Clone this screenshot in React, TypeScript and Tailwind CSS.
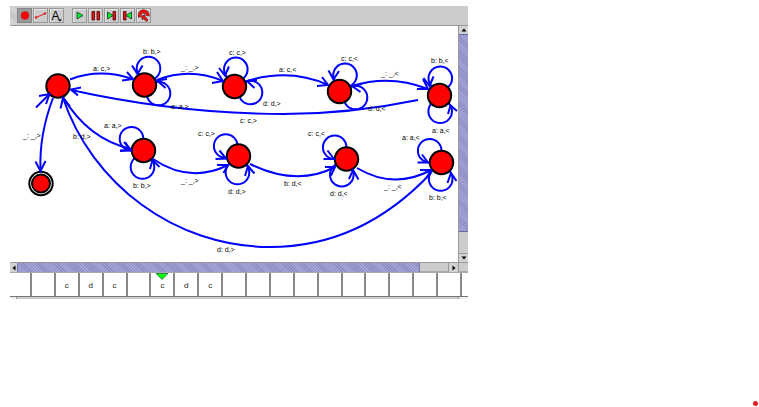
import type { ReactNode } from "react";

type Point = [number, number];

const states: Point[] = [
  [58, 86], [144.5, 85], [234.5, 86.5], [339.5, 91.5], [439.5, 95.5],
  [143.5, 150.5], [238.5, 156], [346.5, 159], [441.5, 162.5],
];

// Centres of the self-transitions; the states cover the part that overlaps them.
const loops: Point[] = [
  [148.5, 68.5], [235.8, 69.3], [345, 75.3], [440.3, 78.3],
  [158.5, 93.5], [250.5, 92.5], [355.5, 97.5], [440.2, 111.3],
  [131.5, 138.7], [142.5, 167], [225.7, 146], [237.5, 172.5],
  [334.7, 147.3], [341.8, 174.7], [429.7, 150.7], [440.7, 179],
];

const edges: string[] = [
  "M70 79.5Q100 68 132 79",
  "M157 80Q190 67 223 81",
  "M247 81Q290 68 328 85",
  "M352 86Q390 74 428 89",
  "M71 90Q180 114 284 114Q350 114 418 100",
  "M63 97Q88 139 131 149",
  "M63 98C92 184 175 247 270 247C330 247 385 222 431 173",
  "M53 98Q39 135 40.5 170",
  "M36 107.5L49 94.5",
  "M153 159Q190 184 228 165",
  "M250 164Q297 187 335 167",
  "M357 168Q394 190 431 170",
];

const heads: string[] = [
  "M122 80.5L133 79L127 72", "M212 83L223 81L217 72", "M317 86L328 85L322 77", "M417 89L428 89L423 79",
  "M81 87.5L71 89.5L78 95.5", "M120 151L131 150L124 142", "M60.5 108.5L63 98L70 106.5",
  "M35.5 161.5L40.5 171L45.5 161", "M39 96L49.5 94L46 104",
  "M217 165L228 165L223.5 173", "M325 167L335 167L331 175.5", "M420 170L431 170L426.5 178",
  "M132 65.5L137.5 74L142.5 65.5", "M219 68L225 75.5L229 66.5", "M328.5 70.5L333.5 79.5L339 71", "M423.5 78L429.5 86L433.5 76.5",
  "M167 79L157 80.5L165.5 88", "M257 80L247 81L254.5 88", "M362 84L352 86L360.5 92", "M448 114L450.5 105.5L457 111",
  "M120 150.5L130 150.5L125.5 142.5", "M150 169L152.5 160L159.5 167", "M215.5 159L226 158.5L219.5 150.5", "M245 176L248 166L254.5 173.5",
  "M323.5 159L334 159L327.5 150.5", "M349 179L353 170L358.5 179.5", "M417.5 162.5L428 162.5L422 154.5", "M447.5 183L451 173L456.5 181",
];

const labels: [string, number, number][] = [
  ["b: b,>", 143, 54], ["a: c,>", 93, 71], ["_: _,>", 181, 70], ["c: c,>", 229, 55],
  ["a: c,<", 279, 72], ["c: c,<", 341, 61], ["_: _,<", 381, 76], ["b: b,<", 431, 63],
  ["a: a,>", 171, 109], ["d: d,>", 263, 106], ["d: d,<", 368, 111], ["c: c,>", 240, 123],
  ["a: a,<", 432, 133], ["a: a,>", 104, 128], ["b: d,>", 73, 139], ["_: _,>", 23, 138],
  ["c: c,>", 198, 136], ["c: c,<", 308, 136], ["a: a,<", 402, 140], ["b: b,>", 133, 188],
  ["_: _,>", 181, 183], ["d: d,>", 228, 194], ["b: d,<", 284, 186], ["d: d,<", 330, 196],
  ["_: _,<", 384, 189], ["b: b,<", 429, 200], ["d: d,>", 217, 252],
];

const tape = ["", "c", "d", "c", "", "c", "d", "c", "", "", "", "", "", "", "", "", "", ""];
const headIndex = 5;

function Diagram() {
  return (
    <svg width="448" height="236" viewBox="10 26 448 236" className="block shrink-0" role="img" aria-label="Turing machine">
      <g fill="none" stroke="#0000ff" strokeWidth="2">
        {loops.map(([x, y]) => <circle key={`${x},${y}`} cx={x} cy={y} r="11.8" />)}
        {edges.map((d) => <path key={d} d={d} />)}
      </g>
      <g fill="#ff0000" stroke="#000" strokeWidth="2">
        {states.map(([x, y]) => <circle key={`${x},${y}`} cx={x} cy={y} r="11.7" />)}
        <circle cx="41" cy="183.5" r="11.7" fill="#fff" />
        <circle cx="41" cy="183.5" r="9" />
      </g>
      <g fill="none" stroke="#0000ff" strokeWidth="2">
        {heads.map((d) => <path key={d} d={d} />)}
      </g>
      <g className="fill-black font-['Liberation_Sans',Arial,sans-serif] text-[7px]">
        {labels.map(([t, x, y]) => <text key={`${x},${y}`} x={x} y={y}>{t}</text>)}
      </g>
    </svg>
  );
}

function Tool({ label, active, children }: { label: string; active?: boolean; children: ReactNode }) {
  return (
    <button
      type="button"
      aria-label={label}
      className={
        active
          ? "size-[15px] shrink-0 border border-[#858585] bg-[#999]"
          : "size-[15px] shrink-0 border border-[#999] bg-[#ccc] shadow-[inset_1px_1px_0_#e4e4e4]"
      }
    >
      <svg viewBox="0 0 13 13" className="block size-[13px]">{children}</svg>
    </button>
  );
}

function ScrollButton({ label, d, className }: { label: string; d: string; className: string }) {
  return (
    <button type="button" aria-label={label} className={`flex shrink-0 items-center justify-center bg-[#d2d2d2] ${className}`}>
      <svg viewBox="0 0 6 6" className="size-[6px]"><path d={d} /></svg>
    </button>
  );
}

const hatch = "bg-[#9999cc] bg-[repeating-linear-gradient(45deg,#a6a6d8_0px,#a6a6d8_1px,#8d8dc4_1px,#8d8dc4_2px)]";

export default function App() {
  return (
    <main className="flex min-h-screen justify-between bg-white pl-[10px] pt-[6px] font-['Liberation_Sans',Arial,sans-serif]">
      <section className="w-full max-w-[458px] self-start">
        <div role="toolbar" aria-label="Tools" className="flex h-5 items-center gap-px border-b border-[#999] bg-[#ccc]">
          <div className="mr-px h-full w-[5px] bg-[repeating-linear-gradient(45deg,#dedede_0px,#dedede_1px,#bcbcbc_1px,#bcbcbc_2px)]" />
          <Tool label="State" active>
            <circle cx="7" cy="6.5" r="4" fill="#f00" stroke="#a33" strokeWidth="0.6" />
          </Tool>
          <Tool label="Transition">
            <path d="M2 8.5L11 4.5" stroke="#e33" strokeWidth="1.2" />
            <circle cx="2" cy="8.5" r="1.2" fill="#d22" />
            <circle cx="11" cy="4.5" r="1.2" fill="#d22" />
          </Tool>
          <Tool label="Text">
            <text x="1.5" y="10.5" fontSize="12">A</text>
            <path d="M8 10.5h4l-2 2z" />
          </Tool>
          <div className="w-[6px]" />
          <Tool label="Run">
            <path d="M4 3L10 6.5L4 10z" fill="#00f020" stroke="#243" strokeWidth="0.9" />
          </Tool>
          <Tool label="Pause">
            <path d="M3 2.5h2.500v8.500h-2.500zM8 2.5h2.500v8.500h-2.500z" fill="#f01010" stroke="#511" strokeWidth="0.9" />
          </Tool>
          <Tool label="Step forward">
            <path d="M2.500 3L8 6.500L2.500 10z" fill="#00f020" stroke="#243" strokeWidth="0.9" />
            <path d="M8 2.500h2.500v8.500h-2.500z" fill="#f01010" stroke="#511" strokeWidth="0.9" />
          </Tool>
          <Tool label="Step back">
            <path d="M10.500 3L5 6.500L10.500 10z" fill="#00f020" stroke="#243" strokeWidth="0.9" />
            <path d="M2.500 2.500h2.500v8.500h-2.500z" fill="#f01010" stroke="#511" strokeWidth="0.9" />
          </Tool>
          <Tool label="Reset">
            <path d="M3 8A4 4 0 1 1 10.600 7" fill="none" stroke="#411" strokeWidth="3.600" />
            <path d="M3 7.800A4 4 0 1 1 10.600 6.800" fill="none" stroke="#f01010" strokeWidth="2.600" />
            <path d="M4.500 7.500L7.500 5.500L8 7.500L11 11L9.500 12.500L6.500 9.500L5.500 11z" fill="#f01010" stroke="#411" strokeWidth="0.600" />
          </Tool>
        </div>

        <div className="flex">
          <div className="min-w-0 flex-1 overflow-hidden"><Diagram /></div>
          <div className="flex w-[10px] shrink-0 flex-col border-l border-[#999] bg-[#ccc]">
            <ScrollButton label="Scroll up" d="M0.500 4.500L3 1.500L5.500 4.500z" className="h-2" />
            <div className={`h-[198px] border-y border-[#6666a0] ${hatch}`} />
            <div className="flex-1" />
            <ScrollButton label="Scroll down" d="M0.500 1.500L3 4.500L5.500 1.500z" className="h-[9px] border-t border-[#999]" />
          </div>
        </div>

        <div className="flex h-[10px] border-t border-[#999] bg-[#ccc]">
          <ScrollButton label="Scroll left" d="M4.500 0.500L1.500 3L4.500 5.500z" className="w-[7px]" />
          <div className={`flex-1 border-x border-[#7777aa] ${hatch}`} />
          <div className="w-7 shrink-0" />
          <ScrollButton label="Scroll right" d="M1.500 0.500L4.500 3L1.500 5.500z" className="w-[10px] border-l border-[#999]" />
          <div className="w-[10px] shrink-0 border-l border-[#999]" />
        </div>

        <div className="flex h-[25px] border-y border-t-[#aaa] border-b-[#777] bg-white text-[8px] leading-[23px] text-[#222] shadow-[0_-1px_0_#aaa]">
          <div className="w-[22px] shrink-0 border-r-2 border-[#888]" />
          {tape.map((symbol, i) => (
            <div key={i} className="relative min-w-0 flex-1 border-r-2 border-[#888] pt-px text-center">
              {symbol}
              {i === headIndex && (
                <svg viewBox="0 0 13 7" className="absolute left-1/2 top-0 h-[7px] w-[13px] -translate-x-1/2">
                  <path d="M0.500 0.500h12L6.500 6.500z" fill="#00ff00" stroke="#264" strokeWidth="0.800" />
                </svg>
              )}
            </div>
          ))}
          <div className="w-[6px] shrink-0" />
        </div>
        <div className="flex h-[2px] justify-between bg-[#ccc]">
          <div className="w-[7px] border-r border-[#999] bg-[#eee]" />
          <div className="w-[10px] border-l border-[#999] bg-[#eee]" />
        </div>
      </section>
      <div className="mb-px mr-px size-[5px] shrink-0 self-end rounded-full bg-[#ed1c24]" />
    </main>
  );
}
